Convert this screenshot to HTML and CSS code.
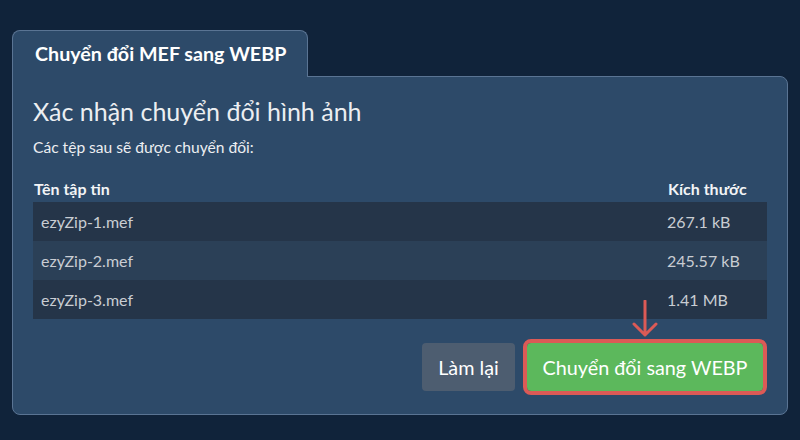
FILE: index.html
```html
<!DOCTYPE html>
<html lang="vi">
<head>
<meta charset="utf-8">
<title>Chuyển đổi MEF sang WEBP</title>
<link rel="stylesheet" href="styles.css">
</head>
<body>
<div class="wrap">
  <div class="tab">Chuyển đổi MEF sang WEBP</div>
  <div class="panel">
    <h1 class="title">Xác nhận chuyển đổi hình ảnh</h1>
    <p class="sub">Các tệp sau sẽ được chuyển đổi:</p>
    <div class="table">
      <div class="thead">
        <div class="th name">Tên tập tin</div>
        <div class="th size">Kích thước</div>
      </div>
      <div class="row odd"><div class="td name">ezyZip-1.mef</div><div class="td size">267.1 kB</div></div>
      <div class="row even"><div class="td name">ezyZip-2.mef</div><div class="td size">245.57 kB</div></div>
      <div class="row odd"><div class="td name">ezyZip-3.mef</div><div class="td size">1.41 MB</div></div>
    </div>
    <div class="actions">
      <svg class="arrow" width="26" height="37" viewBox="0 0 26 37" aria-hidden="true">
        <path d="M13 1 V35 M2 24 L13 35 L24 24" fill="none" stroke="#dc5a56" stroke-width="3" stroke-linecap="round" stroke-linejoin="round"/>
      </svg>
      <button class="btn btn-reset">Làm lại</button>
      <button class="btn btn-go">Chuyển đổi sang WEBP</button>
    </div>
  </div>
</div>
</body>
</html>
```
FILE: styles.css
```css
* { box-sizing: border-box; }
html, body { margin: 0; }
body {
  background: #10233a;
  font-family: Lato, "Noto Sans", "DejaVu Sans", sans-serif;
  color: #e8ebee;
  width: 800px;
  height: 440px;
  overflow: hidden;
}
.wrap {
  padding: 30px 12px 0;
  display: flex;
  flex-direction: column;
  align-items: flex-start;
}
.tab {
  position: relative;
  z-index: 1;
  width: 296px;
  height: 47px;
  margin-bottom: -1px;
  padding: 0 0 0 22px;
  background: #2d4a69;
  border: 1px solid #5a7493;
  border-bottom: 0;
  border-radius: 8px 8px 0 0;
  color: #ffffff;
  font-weight: 700;
  font-size: 19.7px;
  line-height: 45px;
  white-space: nowrap;
}
.panel {
  width: 776px;
  height: 339px;
  background: #2d4a69;
  border: 1px solid #5a7493;
  border-radius: 0 8px 8px 8px;
  padding: 19px 20px 0;
}
.title {
  margin: 0;
  font-size: 25px;
  font-weight: 400;
  line-height: 30px;
  color: #eceef1;
}
.sub {
  margin: 12px 0 0;
  font-size: 15.6px;
  line-height: 19px;
  color: #eceef1;
}
.table { margin-top: 22px; }
.thead, .row {
  display: grid;
  grid-template-columns: 626px 108px;
}
.thead { height: 23px; }
.th {
  font-weight: 700;
  font-size: 16px;
  line-height: 20px;
  color: #f2f4f6;
}
.th.name { padding-left: 1px; }
.th.size { padding-left: 9px; }
.row {
  height: 39px;
  align-items: center;
  font-size: 16px;
  color: #c9cdd3;
}
.row.odd { background: #253549; }
.row.even { background: #2b4057; }
.td { padding-left: 8px; }
.actions {
  position: relative;
  margin-top: 24px;
  display: flex;
  justify-content: flex-end;
  gap: 12px;
  padding-right: 4px;
}
.arrow {
  position: absolute;
  left: 599px;
  top: -43px;
}
.btn {
  height: 48px;
  border: 0;
  border-radius: 4px;
  font-family: inherit;
  font-size: 19.8px;
  color: #ffffff;
  padding: 0;
}
.btn-reset { background: #4d5d70; width: 93px; }
.btn-go {
  background: #5cb85c;
  width: 236px;
  outline: 4px solid #dc5a56;
}
```
